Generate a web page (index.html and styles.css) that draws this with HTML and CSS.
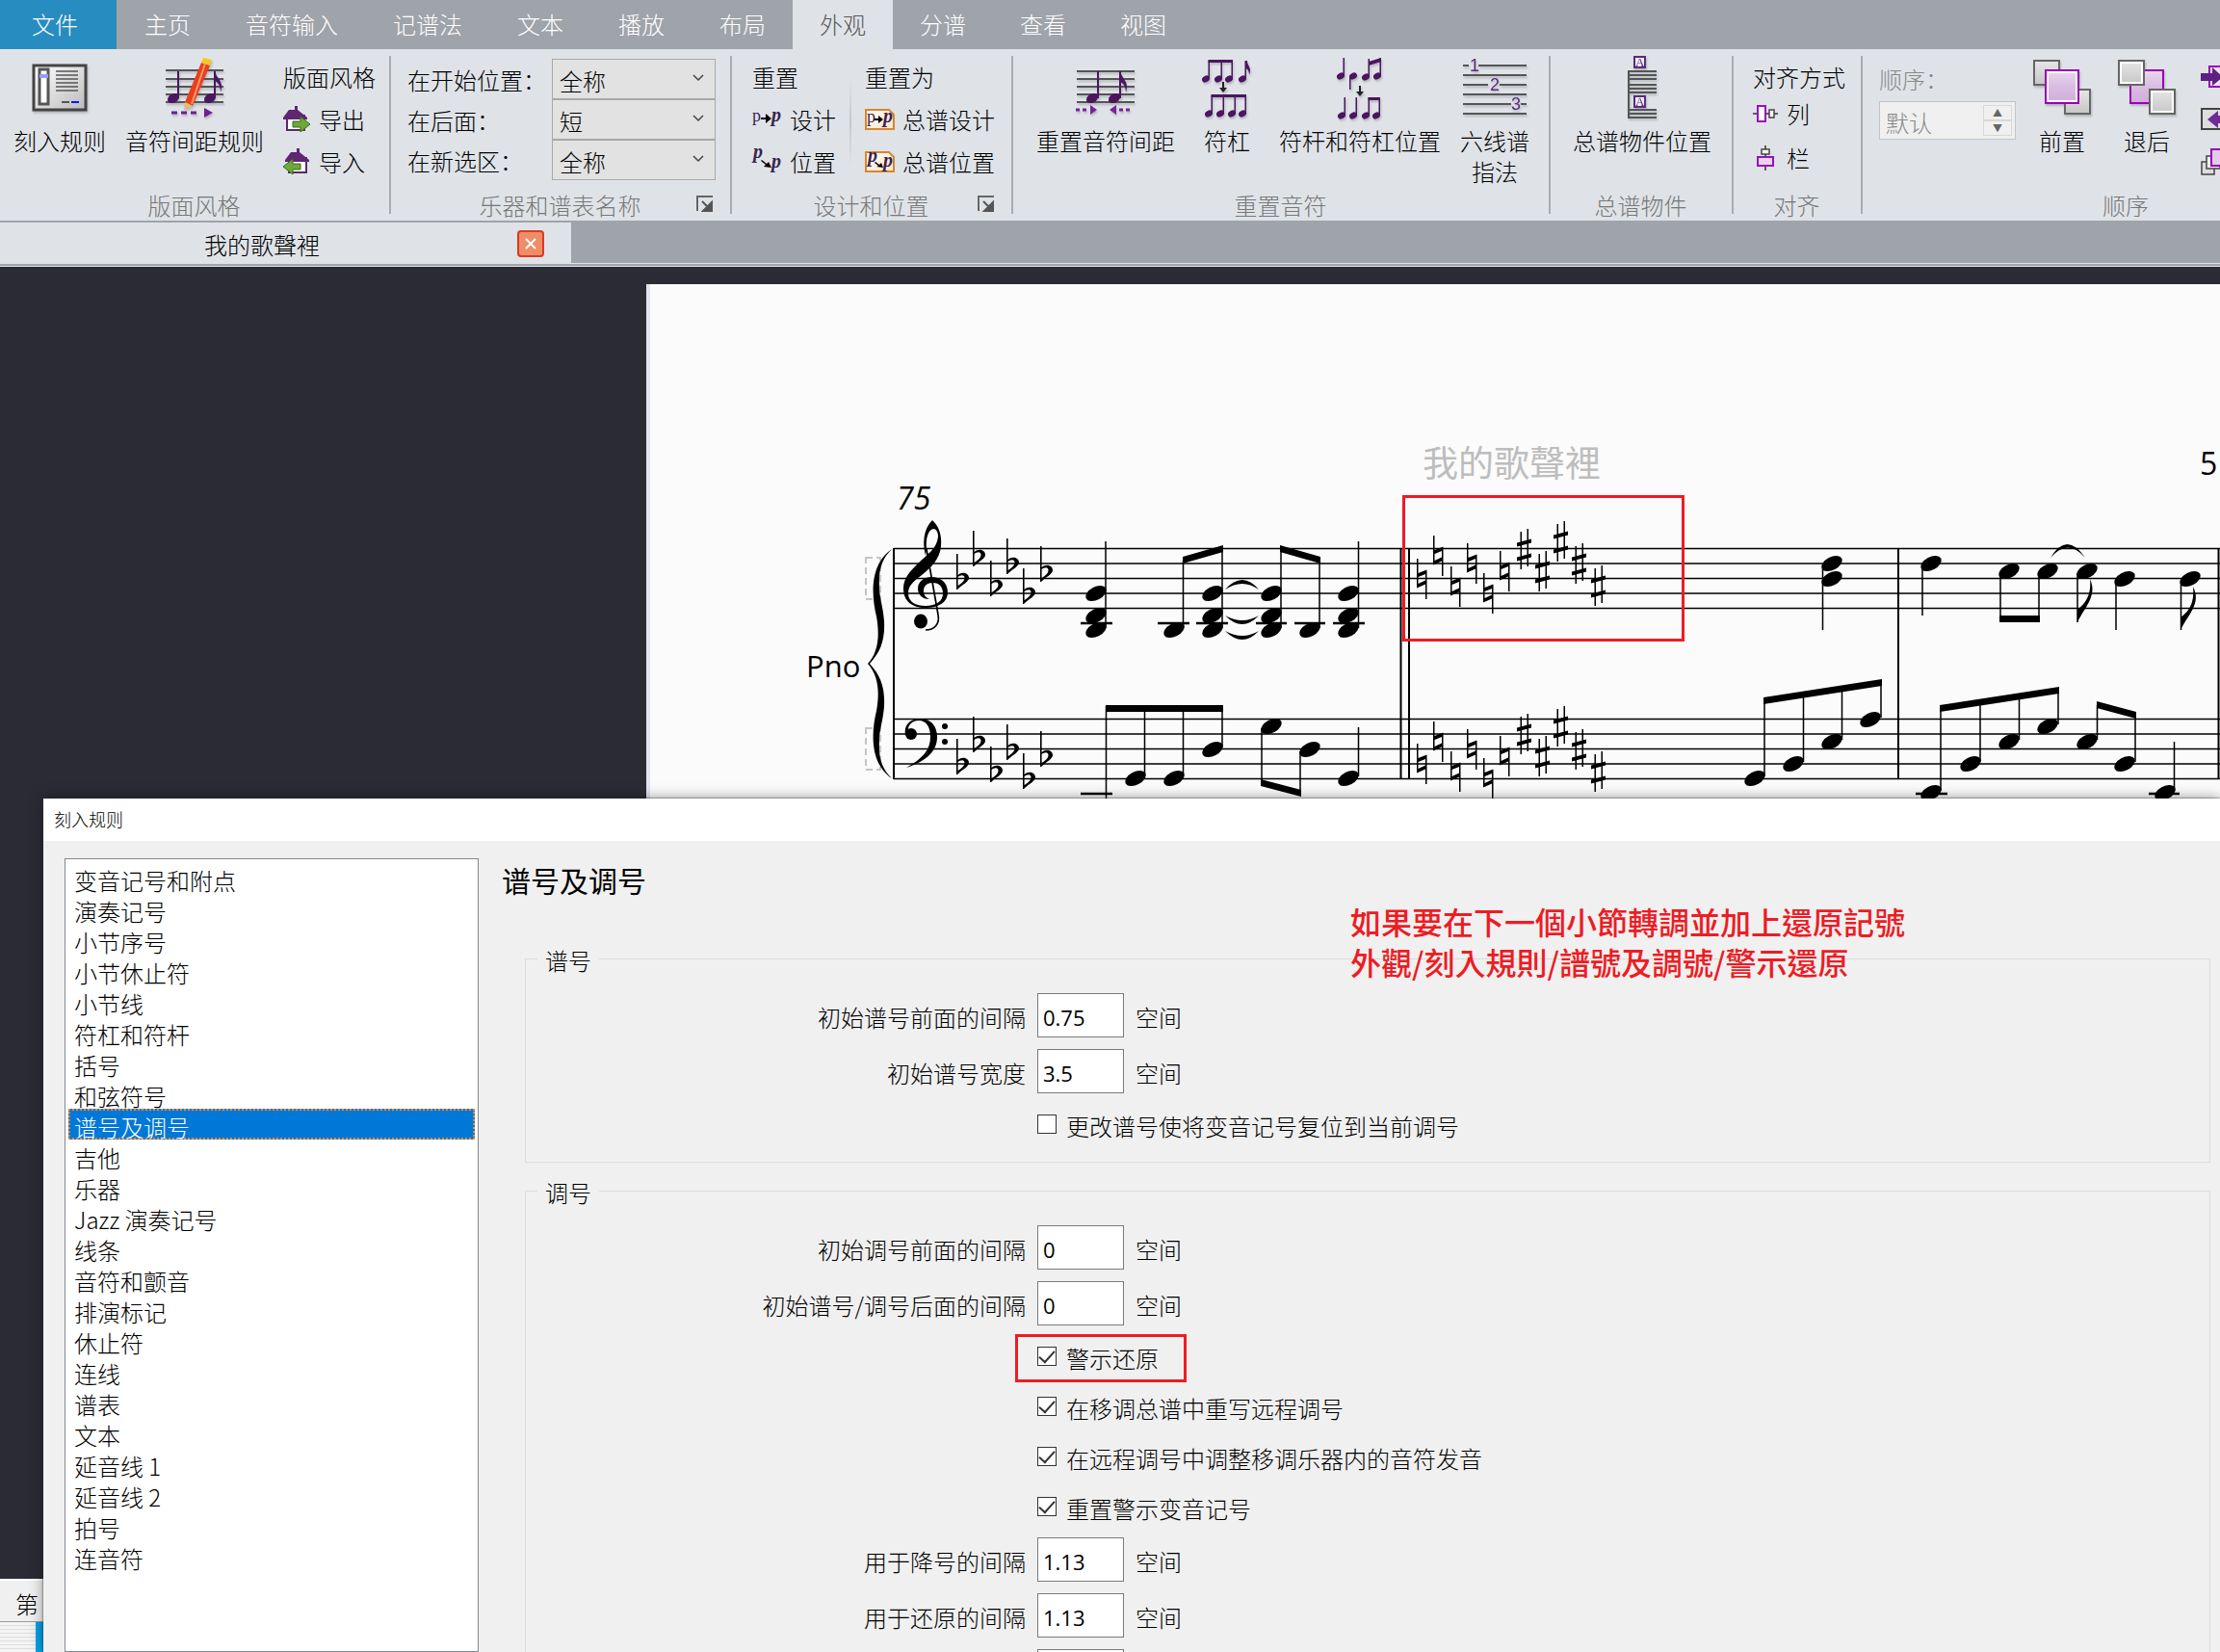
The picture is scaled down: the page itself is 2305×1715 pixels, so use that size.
FILE: index.html
```html
<!DOCTYPE html>
<html lang="zh-CN">
<head>
<meta charset="utf-8">
<title>我的歌聲裡</title>
<link rel="stylesheet" href="styles.css">
</head>
<body>
<svg class="defs" aria-hidden="true">
  <defs>
    <linearGradient id="sheet" x1="0" y1="0" x2="1" y2="1"><stop offset="0" stop-color="#fff"/><stop offset="1" stop-color="#bbb"/></linearGradient>
    <linearGradient id="lilac" x1="0" y1="0" x2="0" y2="1"><stop offset="0" stop-color="#ead9ee"/><stop offset=".5" stop-color="#d9bce2"/><stop offset="1" stop-color="#cfaedb"/></linearGradient>
    <linearGradient id="silver" x1="0" y1="0" x2="0" y2="1"><stop offset="0" stop-color="#e6e6e6"/><stop offset="1" stop-color="#c6c6c6"/></linearGradient>
    <linearGradient id="paper" x1="0" y1="0" x2="1" y2="1"><stop offset="0" stop-color="#fff"/><stop offset="1" stop-color="#fde3c4"/></linearGradient>
    <g id="head"><ellipse rx="11.5" ry="6.8" transform="rotate(-28)"/></g>
    <g id="flat"><path d="M0 0H1.6V22C6 18 13 20 13 25C13 29 6 32 1 37H0ZM1.6 24V33C6 30 8.500 28 8.500 25C8.500 21 4 22 1.600 24Z"/></g>
    <g id="natural"><path d="M0 0H1.500V15L10.500 11.500V42H9V26.500L0 30.500ZM1.500 19V26L9 22.500V16Z" fill-rule="evenodd"/></g>
    <g id="sharp"><path d="M3.500 3H5V42H3.500ZM10.500 0H12V39H10.500ZM0 14.500L15 10.500V14.500L0 18.500ZM0 29.500L15 25.500V29.500L0 33.500Z"/></g>
    <g id="small-note"><ellipse cx="4" cy="19" rx="4.200" ry="3.200" transform="rotate(-28 4 19)"/><path d="M6.500 0H8V19H6.500Z"/></g>
    <g id="house"><path d="M4 10H22V25H4Z" fill="#fff" stroke="#5b2a66" stroke-width="2"/><path d="M12 0H15V4L25 12V14H0V12L6 4H12Z" fill="#5f2672"/></g>
    <g id="launch"><path d="M1 16V1H17" fill="none" stroke="#666" stroke-width="2"/><path d="M6 6L14 14M16 7V16H7Z" fill="#555" stroke="#555" stroke-width="2"/></g>
  </defs>
</svg>

<div class="app">
  <nav class="tabs">
    <button class="tab tab-file">文件</button>
    <button class="tab">主页</button>
    <button class="tab">音符输入</button>
    <button class="tab">记谱法</button>
    <button class="tab">文本</button>
    <button class="tab">播放</button>
    <button class="tab">布局</button>
    <button class="tab tab-active">外观</button>
    <button class="tab">分谱</button>
    <button class="tab">查看</button>
    <button class="tab">视图</button>
  </nav>

  <div class="ribbon">
    <section class="group group-style">
      <div class="group-body">
        <button class="big">
          <span class="big-icon"><svg width="58" height="54" viewBox="0 0 58 54"><rect x="2" y="4" width="54" height="46" fill="url(#sheet)" stroke="#444" stroke-width="3"/><rect x="8" y="8" width="9" height="36" fill="#fff" stroke="#555" stroke-width="3"/><path d="M8 15H17" stroke="#99f" stroke-width="4"/><path d="M25 10H48M25 14H48M25 18H48M25 22H48M25 26H48M25 30H48" stroke="#555" stroke-width="1.500"/><path d="M31 42H39" stroke="#555" stroke-width="2"/><path d="M41 42H49" stroke="#11f" stroke-width="2"/></svg></span>
          <span>刻入规则</span>
        </button>
        <button class="big">
          <span class="big-icon"><svg width="62" height="62" viewBox="0 0 62 62"><path d="M1 13H61M1 22H61M1 30H61M1 38H61M1 46H61" stroke="#555" stroke-width="2"/><path d="M14 14V42M52 14V42" stroke="#4b1560" stroke-width="2"/><path d="M52 14C54 22 62 24 58 36C58 27 54 25 52 24Z" fill="#4b1560"/><ellipse cx="9" cy="42" rx="6.500" ry="4.500" transform="rotate(-30 9 42)" fill="#4b1560"/><ellipse cx="47" cy="42" rx="6.500" ry="4.500" transform="rotate(-30 47 42)" fill="#4b1560"/><path d="M7 57H36" stroke="#6f1f91" stroke-width="3" stroke-dasharray="6 4"/><path d="M41 52V62L50 57Z" fill="#6f1f91"/><path d="M38 5L47 8L29 50L21 46Z" fill="#e8401c"/><path d="M42 6L28 48" stroke="#ff9468" stroke-width="2"/><path d="M21 46L29 50L20 54Z" fill="#e6b978"/><path d="M38 5L40 0L49 2L47 8Z" fill="#f6c921"/></svg></span>
          <span>音符间距规则</span>
        </button>
        <div class="stack">
          <span class="stack-title">版面风格</span>
          <button class="small"><svg width="28" height="28" viewBox="0 0 28 28"><use href="#house"/><path d="M10 16H18V11L28 19L18 27V22H10Z" fill="#6ea83a" stroke="#3b6b1c"/></svg>导出</button>
          <button class="small"><svg width="28" height="28" viewBox="0 0 28 28"><use href="#house" x="2"/><path d="M18 16H10V11L0 19L10 27V22H18Z" fill="#6ea83a" stroke="#3b6b1c"/></svg>导入</button>
        </div>
      </div>
      <div class="caption">版面风格</div>
    </section>

    <section class="group group-names">
      <div class="fields">
        <label for="at-start">在开始位置：</label>
        <div class="drop"><select id="at-start"><option>全称</option></select><svg width="12" height="8" viewBox="0 0 12 8"><path d="M1 1L6 6L11 1" fill="none" stroke="#444" stroke-width="1.500"/></svg></div>
        <label for="after">在后面：</label>
        <div class="drop"><select id="after"><option>短</option></select><svg width="12" height="8" viewBox="0 0 12 8"><path d="M1 1L6 6L11 1" fill="none" stroke="#444" stroke-width="1.500"/></svg></div>
        <label for="at-section">在新选区：</label>
        <div class="drop"><select id="at-section"><option>全称</option></select><svg width="12" height="8" viewBox="0 0 12 8"><path d="M1 1L6 6L11 1" fill="none" stroke="#444" stroke-width="1.500"/></svg></div>
      </div>
      <div class="caption">乐器和谱表名称</div>
      <button class="launcher" aria-label="乐器和谱表名称"><svg width="17" height="17"><use href="#launch"/></svg></button>
    </section>

    <section class="group group-design">
      <div class="group-body">
        <div class="stack">
          <span class="stack-title">重置</span>
          <button class="small"><svg class="pp" width="32" height="32" viewBox="0 0 32 32"><text x="0" y="18">p</text><path d="M9 14H14V10L20 15L14 20V16H9Z"/><text class="pi" x="20" y="18">p</text></svg>设计</button>
          <button class="small"><svg class="pp" width="32" height="32" viewBox="0 0 32 32"><text class="pi" x="1" y="12">p</text><path d="M10 14L15 18L17 16L20 22L12 21L14 19L9 15Z"/><text class="pi" x="20" y="22">p</text></svg>位置</button>
        </div>
        <div class="rule"></div>
        <div class="stack">
          <span class="stack-title">重置为</span>
          <button class="small"><svg class="pp" width="32" height="32" viewBox="0 0 32 32"><path class="card" d="M1 6H25L30 11V26H1Z"/><text x="2" y="19">p</text><path d="M10 15H14V12L19 16L14 20V17H10Z"/><text class="pi" x="19" y="19">p</text></svg>总谱设计</button>
          <button class="small"><svg class="pp" width="32" height="32" viewBox="0 0 32 32"><path class="card" d="M1 6H25L30 11V26H1Z"/><text class="pi" x="3" y="16">p</text><path d="M11 16L15 19L17 17L19 22L12 21L14 20L10 17Z"/><text class="pi" x="19" y="21">p</text></svg>总谱位置</button>
        </div>
      </div>
      <div class="caption">设计和位置</div>
      <button class="launcher" aria-label="设计和位置"><svg width="17" height="17"><use href="#launch"/></svg></button>
    </section>

    <section class="group group-notes">
      <div class="group-body">
        <button class="big">
          <span class="big-icon"><svg width="62" height="62" viewBox="0 0 62 62"><path d="M1 14H61M1 22H61M1 30H61M1 38H61M1 46H61" stroke="#555" stroke-width="2"/><path d="M23 14V42M46 14V42" stroke="#4b1560" stroke-width="2"/><path d="M46 14C48 22 56 25 52 36C52 28 48 26 46 25Z" fill="#4b1560"/><ellipse cx="17" cy="42" rx="6.500" ry="4.500" transform="rotate(-30 17 42)" fill="#4b1560"/><ellipse cx="40" cy="42" rx="6.500" ry="4.500" transform="rotate(-30 40 42)" fill="#4b1560"/><path d="M0 54H13M45 54H58" stroke="#7a2299" stroke-width="3" stroke-dasharray="4 3"/><path d="M15 49V59L22 54ZM42 49V59L35 54Z" fill="#7a2299"/></svg></span>
          <span>重置音符间距</span>
        </button>
        <button class="big">
          <span class="big-icon"><svg width="52" height="60" viewBox="0 0 52 60" fill="#4b1560"><use href="#small-note" y="2"/><use href="#small-note" x="13" y="2"/><use href="#small-note" x="24" y="2"/><path d="M6.500 1H32V4H6.500ZM47 2C47 8 52 8 49 17C49 12 47 11 46 10V2Z"/><use href="#small-note" x="38" y="2"/><use href="#small-note" x="3" y="38"/><use href="#small-note" x="15" y="38"/><use href="#small-note" x="27" y="38"/><use href="#small-note" x="38" y="38"/><path d="M9.500 37H46V40H9.500Z"/><path d="M21 24H23V30H26L22 35L18 30H21Z" fill="#222"/></svg></span>
          <span>符杠</span>
        </button>
        <button class="big">
          <span class="big-icon"><svg width="48" height="62" viewBox="0 0 48 62" fill="#4b1560"><use href="#small-note" y="0"/><ellipse cx="17" cy="19" rx="4.200" ry="3.200" transform="rotate(-28 17 19)"/><path d="M13 19H14.500V33H13ZM33 4L46 0V4L33 8Z"/><use href="#small-note" x="26" y="1"/><use href="#small-note" x="38" y="0"/><use href="#small-note" x="1" y="41"/><use href="#small-note" x="13" y="41"/><use href="#small-note" x="26" y="41"/><use href="#small-note" x="37" y="41"/><path d="M32.500 44V41H45V44Z"/><path d="M23 29H25V35H28L24 40L20 35H23Z" fill="#222"/></svg></span>
          <span>符杆和符杠位置</span>
        </button>
        <button class="big">
          <span class="big-icon"><svg width="66" height="62" viewBox="0 0 66 62" class="fingering"><path d="M0 8H6M16 8H66M0 18H66M0 28H26M38 28H66M0 38H66M0 48H50M60 48H66M0 58H66" stroke="#555" stroke-width="2"/><text x="7" y="14">1</text><text x="28" y="34">2</text><text x="50" y="54">3</text></svg></span>
          <span>六线谱<br>指法</span>
        </button>
      </div>
      <div class="caption">重置音符</div>
    </section>

    <section class="group group-objects">
      <div class="group-body">
        <button class="big">
          <span class="big-icon"><svg width="32" height="66" viewBox="0 0 32 66" class="objects"><path d="M2 15V65M1 16H31M1 20H31M1 24H31M1 30H31M1 34H31M1 38H31M1 56H31M1 60H31M1 64H31" stroke="#555" stroke-width="2"/><rect x="8" y="1" width="11" height="11"/><rect x="8" y="42" width="11" height="11"/><text x="9" y="11">A</text><text x="9" y="52">A</text></svg></span>
          <span>总谱物件位置</span>
        </button>
      </div>
      <div class="caption">总谱物件</div>
    </section>

    <section class="group group-align">
      <div class="group-body">
        <div class="stack stack-tight">
          <span class="stack-title">对齐方式</span>
          <button class="small"><svg width="26" height="26" viewBox="0 0 26 26"><path d="M0 13H26" stroke="#333" stroke-width="1.500"/><rect x="5" y="5" width="8" height="16" fill="#fff" stroke="#9a10b8" stroke-width="2"/><rect x="17" y="9" width="5" height="8" fill="#fff" stroke="#444" stroke-width="1.500"/></svg>列</button>
          <button class="small"><svg width="26" height="26" viewBox="0 0 26 26"><path d="M13 0V26" stroke="#333" stroke-width="1.500"/><rect x="5" y="12" width="16" height="9" fill="#ead4f0" stroke="#9a10b8" stroke-width="2"/><rect x="9" y="4" width="8" height="5" fill="#fff" stroke="#444" stroke-width="1.500"/></svg>栏</button>
        </div>
      </div>
      <div class="caption">对齐</div>
    </section>

    <section class="group group-order">
      <div class="group-body">
        <div class="order-field">
          <label for="order">顺序：</label>
          <div class="spin">
            <input id="order" type="text" value="默认" disabled>
            <span class="spin-buttons"><button aria-label="增加" disabled>▲</button><button aria-label="减少" disabled>▼</button></span>
          </div>
        </div>
        <button class="big">
          <span class="big-icon"><svg width="62" height="60" viewBox="0 0 62 60"><rect x="2" y="2" width="26" height="25" fill="url(#silver)" stroke="#666" stroke-width="2"/><rect x="34" y="32" width="26" height="25" fill="url(#silver)" stroke="#666" stroke-width="2"/><rect x="14" y="12" width="34" height="34" fill="url(#lilac)" stroke="#9a00b5" stroke-width="2"/><rect x="16" y="14" width="30" height="30" fill="none" stroke="#fff" stroke-width="2"/></svg></span>
          <span>前置</span>
        </button>
        <button class="big">
          <span class="big-icon"><svg width="62" height="60" viewBox="0 0 62 60"><rect x="14" y="12" width="34" height="34" fill="url(#lilac)" stroke="#9a00b5" stroke-width="2"/><rect x="2" y="2" width="26" height="25" fill="url(#silver)" stroke="#666" stroke-width="2"/><rect x="4" y="4" width="22" height="21" fill="none" stroke="#fff" stroke-width="2"/><rect x="34" y="32" width="26" height="25" fill="url(#silver)" stroke="#666" stroke-width="2"/><rect x="36" y="34" width="22" height="21" fill="none" stroke="#fff" stroke-width="2"/></svg></span>
          <span>退后</span>
        </button>
        <div class="stack">
          <button class="small" aria-label="前移"><svg width="28" height="24" viewBox="0 0 28 24"><path d="M9 1H28V22H9Z" fill="#f0e2f3" stroke="#9a00b5" stroke-width="2"/><path d="M0 8H12V2L23 12L12 21V16H0Z" fill="#5b2080"/></svg></button>
          <button class="small" aria-label="后移"><svg width="28" height="24" viewBox="0 0 28 24"><path d="M1 1H21V22H1Z" fill="#ddd" stroke="#444" stroke-width="2"/><path d="M28 8H18V3L7 12L18 21V16H28Z" fill="#6d2a99"/></svg></button>
          <button class="small" aria-label="重排"><svg width="28" height="28" viewBox="0 0 28 28"><path d="M1 14H14V27H1Z" fill="#ddd" stroke="#444" stroke-width="1.500"/><path d="M6 8H20V21H6Z" fill="#eee" stroke="#444" stroke-width="1.500"/><path d="M11 1H28V18H11Z" fill="#e3cbea" stroke="#9a00b5" stroke-width="2"/></svg></button>
        </div>
      </div>
      <div class="caption">顺序</div>
    </section>
  </div>

  <div class="documents">
    <div class="document">
      <span class="document-name">我的歌聲裡</span>
      <button class="close" aria-label="关闭"><svg width="14" height="14" viewBox="0 0 14 14"><path d="M2 2L12 12M12 2L2 12" stroke="#fff" stroke-width="2"/></svg></button>
    </div>
  </div>

  <main class="workspace">
    <div class="page">
      <svg class="score" width="1634" height="540" viewBox="671 295 1634 540">
        <text class="song" x="1477" y="495">我的歌聲裡</text>
        <text class="page-number" x="2284" y="493">5</text>
        <text class="bar-number" x="931" y="529">75</text>
        <text class="part" x="837" y="703">Pno</text>
        <g class="brackets"><rect x="899" y="579" width="15" height="43"/><rect x="899" y="756" width="15" height="43"/></g>
        <path id="brace" d="M926 570C904 585 904 615 910 640C914 662 911 678 901 689C911 700 914 716 910 738C904 763 904 793 926 808C916 798 912 788 913 768C913 758 917 748 918 733C919 713 914 701 903 689C914 677 919 665 918 645C917 630 913 620 913 610C912 590 916 580 926 570Z"/>
        <path class="staff" d="M928 569.500H2305M928 585H2305M928 600.500H2305M928 616H2305M928 631.500H2305M928 746.500H2305M928 762H2305M928 777.500H2305M928 793H2305M928 808.500H2305"/>
        <path class="bars" d="M928 569V809M1454.500 569V809M1463 569V809M1971 569V809M2303.500 569V809"/>
        <path d="M961 577C958 565 958 550 968 540C975 546 978 556 977 567C976 580 967 589 957 597C948 604 943 608 943 616C943 625 951 629 961 629C972 629 979 624 979 616C979 608 974 605 968 605C962 605 959 609 959 613C959 618 961 620 965 622C957 622 953 617 953 611C953 604 959 599 967 599C977 599 984 605 984 615C984 625 975 631 961 631C947 631 938 624 938 611C938 600 945 593 953 585C962 576 973 570 974 557C974 552 972 549 969 549C964 550 961 558 962 570Z"/>
        <path d="M962 570L974 638C976 648 970 654 961 654" fill="none" stroke="#000" stroke-width="1.700"/><ellipse cx="956" cy="645" rx="7" ry="7.500"/>
        <path d="M940 763C938 752 946 746 955 746C967 746 973 754 973 765C973 780 962 790 941 797C957 788 966 779 966 765C966 755 962 748 954 748C947 748 943 753 943 757Z"/><circle cx="946" cy="762" r="6"/><circle cx="981" cy="754" r="3"/><circle cx="981" cy="770" r="3"/>
        <use href="#flat" x="993" y="575"/><use href="#flat" x="1010" y="551"/><use href="#flat" x="1028" y="582"/><use href="#flat" x="1045" y="559"/><use href="#flat" x="1062" y="590"/><use href="#flat" x="1080" y="567"/>
        <use href="#flat" x="993" y="767"/><use href="#flat" x="1010" y="744"/><use href="#flat" x="1028" y="775"/><use href="#flat" x="1045" y="752"/><use href="#flat" x="1062" y="782"/><use href="#flat" x="1080" y="759"/>
        <use href="#natural" x="1471" y="580"/><use href="#natural" x="1488" y="556"/><use href="#natural" x="1506" y="588"/><use href="#natural" x="1523" y="564"/><use href="#natural" x="1540" y="595"/><use href="#natural" x="1557" y="572"/>
        <use href="#sharp" x="1575" y="549"/><use href="#sharp" x="1594" y="572"/><use href="#sharp" x="1613" y="541"/><use href="#sharp" x="1632" y="564"/><use href="#sharp" x="1652" y="587"/>
        <use href="#natural" x="1471" y="772"/><use href="#natural" x="1488" y="749"/><use href="#natural" x="1506" y="780"/><use href="#natural" x="1523" y="757"/><use href="#natural" x="1540" y="787"/><use href="#natural" x="1557" y="764"/>
        <use href="#sharp" x="1575" y="741"/><use href="#sharp" x="1594" y="764"/><use href="#sharp" x="1613" y="733"/><use href="#sharp" x="1632" y="757"/><use href="#sharp" x="1652" y="780"/>
        <use href="#head" x="1138" y="616"/><use href="#head" x="1138" y="639"/><use href="#head" x="1138" y="654"/>
        <use href="#head" x="1219" y="654"/>
        <use href="#head" x="1259" y="616"/><use href="#head" x="1259" y="639"/><use href="#head" x="1259" y="654"/>
        <use href="#head" x="1320" y="616"/><use href="#head" x="1320" y="639"/><use href="#head" x="1320" y="654"/>
        <use href="#head" x="1360" y="654"/>
        <use href="#head" x="1400" y="616"/><use href="#head" x="1400" y="639"/><use href="#head" x="1400" y="654"/>
        <use href="#head" x="1902" y="585"/><use href="#head" x="1902" y="601"/>
        <use href="#head" x="2005" y="585"/><use href="#head" x="2086" y="593"/><use href="#head" x="2126" y="593"/><use href="#head" x="2167" y="593"/><use href="#head" x="2206" y="601"/><use href="#head" x="2274" y="601"/>
        <use href="#head" x="1179" y="808"/><use href="#head" x="1219" y="808"/><use href="#head" x="1259" y="778"/><use href="#head" x="1320" y="754"/><use href="#head" x="1360" y="778"/><use href="#head" x="1400" y="808"/>
        <use href="#head" x="1822" y="808"/><use href="#head" x="1862" y="793"/><use href="#head" x="1902" y="770"/><use href="#head" x="1942" y="747"/>
        <use href="#head" x="2005" y="823"/><use href="#head" x="2046" y="793"/><use href="#head" x="2086" y="770"/><use href="#head" x="2126" y="754"/><use href="#head" x="2167" y="770"/><use href="#head" x="2206" y="793"/><use href="#head" x="2248" y="823"/>
        <path class="ledgers" d="M1122 647H1155M1202 647H1235M1242 647H1275M1304 647H1336M1344 647H1376M1384 647H1417M1122 824H1155M1989 824H2022M2231 824H2263"/>
        <path class="stems" d="M1148 562V652M1228.500 582V652M1269 570V652M1330 570V652M1370 582V652M1410.500 562V652M1892.500 587V654M1996 587V639M2077 595V645M2117 595V645M2157 595V646M2197 603V654M2264.500 603V654M1148.500 733V835M1188.500 735V806M1228.500 735V806M1269 735V776M1310 756V815M1350 780V826M1410.500 755V806M1832 728V806M1872.500 722V791M1912.500 716V768M1953 708V745M2015 736V821M2056 730V791M2096.500 724V768M2137 716V752M2177.500 732V768M2217 743V791M2257.500 770V821"/>
        <path d="M1228 578L1270 566V573L1228 585ZM1329 566L1371 578V585L1329 573ZM2076 639H2118V646H2076ZM1148 732H1270V739H1148ZM1309 809L1351 820V827L1309 816ZM1831 724L1954 705V712L1831 731ZM2014 732L2138 713V720L2014 739ZM2177 728L2218 739V746L2177 735Z"/>
        <path d="M1272 612Q1290 592 1307 612Q1290 600 1272 612ZM1272 639Q1290 657 1307 639Q1290 649 1272 639ZM1272 655Q1290 673 1307 655Q1290 665 1272 655ZM2129 579Q2146 551 2165 579Q2147 558 2129 579Z"/>
        <path d="M2157 646V633C2163 628 2172 620 2170 601C2178 618 2165 630 2157 646ZM2264 654V641C2271 636 2279 628 2277 609C2286 626 2272 638 2264 654Z"/>
        <rect class="mark" x="1457.500" y="515.500" width="290" height="149"/>
      </svg>
    </div>
  </main>
  <footer class="status">第</footer>
  <div class="below"><div class="below-edge"></div></div>

  <section class="dialog">
    <header class="dialog-title">刻入规则</header>
    <div class="dialog-body">
      <div class="list">
        <button>变音记号和附点</button>
        <button>演奏记号</button>
        <button>小节序号</button>
        <button>小节休止符</button>
        <button>小节线</button>
        <button>符杠和符杆</button>
        <button>括号</button>
        <button>和弦符号</button>
        <button class="selected">谱号及调号</button>
        <button>吉他</button>
        <button>乐器</button>
        <button>Jazz 演奏记号</button>
        <button>线条</button>
        <button>音符和颤音</button>
        <button>排演标记</button>
        <button>休止符</button>
        <button>连线</button>
        <button>谱表</button>
        <button>文本</button>
        <button>延音线 1</button>
        <button>延音线 2</button>
        <button>拍号</button>
        <button>连音符</button>
      </div>
      <form class="panel">
        <h1>谱号及调号</h1>
        <p class="note" lang="zh-TW">如果要在下一個小節轉調並加上還原記號<br>外觀/刻入規則/譜號及調號/警示還原</p>
        <fieldset>
          <legend>谱号</legend>
          <div class="row"><label for="clef-gap">初始谱号前面的间隔</label><input id="clef-gap" type="text" value="0.75"><span>空间</span></div>
          <div class="row"><label for="clef-width">初始谱号宽度</label><input id="clef-width" type="text" value="3.5"><span>空间</span></div>
          <div class="check"><label><input type="checkbox"><span>更改谱号使将变音记号复位到当前调号</span></label></div>
        </fieldset>
        <fieldset>
          <legend>调号</legend>
          <div class="row"><label for="key-gap">初始调号前面的间隔</label><input id="key-gap" type="text" value="0"><span>空间</span></div>
          <div class="row"><label for="after-gap">初始谱号/调号后面的间隔</label><input id="after-gap" type="text" value="0"><span>空间</span></div>
          <div class="check"><label class="marked"><input type="checkbox" checked><span>警示还原</span></label></div>
          <div class="check"><label><input type="checkbox" checked><span>在移调总谱中重写远程调号</span></label></div>
          <div class="check"><label><input type="checkbox" checked><span>在远程调号中调整移调乐器内的音符发音</span></label></div>
          <div class="check"><label><input type="checkbox" checked><span>重置警示变音记号</span></label></div>
          <div class="row"><label for="flat-gap">用于降号的间隔</label><input id="flat-gap" type="text" value="1.13"><span>空间</span></div>
          <div class="row"><label for="natural-gap">用于还原的间隔</label><input id="natural-gap" type="text" value="1.13"><span>空间</span></div>
          <div class="row"><input class="unlabelled" aria-label="间隔" type="text"></div>
        </fieldset>
      </form>
    </div>
  </section>
</div>
</body>
</html>
```
FILE: styles.css
```css
* { box-sizing: border-box; }

body {
  margin: 0;
  height: 100vh;
  overflow: hidden;
  font: 300 24px/32px "Noto Sans CJK SC", sans-serif;
  color: #000;
}

button, input, select { font: inherit; color: inherit; margin: 0; padding: 0; border: 0; background: none; border-radius: 0; }
.defs { position: absolute; width: 0; height: 0; }

.app { position: relative; height: 100%; display: flex; flex-direction: column; background: #2b2b35; }

/* tabs */
.tabs { flex: none; display: flex; height: 51px; background: #9fa3aa; color: #fff; }
.tab { padding: 0 28px 2px; white-space: nowrap; }
.tab-file { background: #278cbf; padding: 0 40px 2px 33px; }
.tab-file ~ .tab { margin-left: 1px; }
.tabs .tab-active, .tab-active ~ .tab.tab { margin-left: 0; }
.tab-active { background: #dfe3e8; color: #555; }

/* ribbon */
.ribbon { flex: none; display: flex; height: 180px; padding-top: 7px; overflow: hidden; background: #dfe3e8; border-bottom: 2px solid #9fa3aa; }
.group {
  position: relative;
  flex: none;
  display: flex;
  flex-direction: column;
  background: linear-gradient(#a9adb2, #a9adb2) right top / 2px 164px no-repeat;
}
.group-style { width: 406px; padding-left: 14px; }
.group-names { width: 354px; padding: 3px 17px 0 17px; }
.group-design { width: 292px; padding-left: 21px; }
.group-notes { width: 558px; padding-left: 24px; }
.group-objects { width: 190px; padding-left: 23px; }
.group-align { width: 134px; padding-left: 20px; }
.group-order { width: 549px; padding-left: 17px; }
.group-body { display: flex; gap: 20px; height: 142px; }
.group-notes .group-body { gap: 28px; }
.group-notes .group-body .big:last-child { margin-left: -8px; }
.group-design .group-body { gap: 14px; }
.group-order .group-body { gap: 24px; }
.group-order .big { width: 64px; }
.group-order .order-field + .big { margin-left: -8px; }
.caption { position: absolute; left: 0; right: 3px; bottom: 1px; text-align: center; line-height: 30px; color: #777; }
.launcher { position: absolute; right: 20px; top: 145px; width: 17px; height: 17px; line-height: 0; }

.big { flex: none; display: flex; flex-direction: column; align-items: center; white-space: nowrap; }
.big-icon { height: 72px; display: flex; align-items: center; }
.big-icon svg { margin-bottom: 6px; filter: drop-shadow(1px 2px 1px #0003); overflow: visible; }

.stack { flex: none; display: grid; grid-template-rows: 44px 44px 44px; align-items: center; justify-items: start; align-content: start; white-space: nowrap; }
.stack-tight { grid-template-rows: 44px 32px 60px; }
.small { display: flex; align-items: center; gap: 9px; }
.group-design .small { gap: 7px; }
.rule { width: 2px; height: 90px; margin-top: 24px; background: linear-gradient(#dfe3e8, #c4c8cd, #dfe3e8); }

.pp { overflow: visible; }
.pp text { font: 18px "Liberation Serif", serif; fill: #3a2350; }
.pp .pi { font-style: italic; font-weight: 700; font-size: 20px; }
.pp .card { fill: url(#paper); stroke: #d9862b; stroke-width: 2; }
.fingering text { font: 18px "Liberation Sans", sans-serif; fill: #5b2a80; }
.objects rect { fill: #eee; stroke: #5b2a80; stroke-width: 2; }
.objects text { font: 13px "Liberation Serif", serif; fill: #5b2a80; }

.fields { display: grid; grid-template-columns: 1fr 170px; grid-auto-rows: 42px; }
.fields label, .order-field label { font-family: "Noto Sans CJK TC", sans-serif; white-space: nowrap; }
.fields label { padding-top: 6px; }
.drop { position: relative; }
.drop select { width: 100%; height: 42px; padding: 4px 0 0 7px; appearance: none; background: #e2e2e2; border: 1px solid #a8a8a8; }
.drop svg { position: absolute; right: 12px; top: 16px; }

.order-field { width: 142px; padding-top: 8px; color: #888; }
.order-field label { display: block; }
.spin { display: flex; height: 40px; margin-top: 7px; padding: 3px; background: #f0f0f0; border: 1px solid #c4c4c4; }
.spin input { flex: 1; min-width: 0; padding: 4px 0 0 3px; }
.spin-buttons { display: grid; width: 30px; grid-template-rows: 1fr 1fr; }
.spin-buttons button { border: 1px solid #d8d8d8; font-size: 10px; line-height: 12px; color: #666; }

/* open documents */
.documents { flex: none; display: flex; height: 46px; background: #9fa3aa; border-bottom: 4px double #dfe3e8; }
.document { display: flex; align-items: center; width: 593px; padding: 3px 28px 0 212px; justify-content: space-between; background: #dfe3e8; }
.close { display: grid; place-items: center; width: 28px; height: 28px; margin-bottom: 2px; background: #ee8d66; border: 2px solid #d83a26; border-radius: 4px; }

/* score */
.workspace { flex: 1; min-height: 0; padding: 18px 0 0 671px; overflow: hidden; }
.page { background: #fbfbfb; border-left: 4px solid #e4e4f0; height: 100%; overflow: hidden; }
.score { display: block; margin-left: -4px; }
.song { font: 37px "Noto Sans CJK TC", sans-serif; fill: #bdbdbd; }
.page-number, .bar-number, .part { font: 32px "Open Sans", sans-serif; }
.bar-number { font-style: italic; }
.part { font-size: 31px; }
.brackets rect { fill: none; stroke: #c4c4c4; stroke-width: 2; stroke-dasharray: 7 4; }
.staff { fill: none; stroke: #000; stroke-width: 1.4; }
.bars { fill: none; stroke: #000; stroke-width: 2; }
.ledgers { fill: none; stroke: #000; stroke-width: 2.4; }
.stems { fill: none; stroke: #000; stroke-width: 1.5; }
.mark { fill: none; stroke: #ed1c24; stroke-width: 3; }

.status { flex: none; height: 45px; padding: 8px 0 0 16px; background: #f0f0f0; border-top: 2px solid #fff; border-bottom: 1px solid #999; }
.below { flex: none; height: 31px; background: repeating-linear-gradient(#f4f4f4 0 3px, #dedede 3px 4px); }
.below-edge { width: 45px; height: 100%; border-right: 8px solid #00a2e8; }

/* dialog */
.dialog {
  position: absolute;
  left: 45px;
  top: 829px;
  right: 0;
  bottom: 0;
  display: flex;
  flex-direction: column;
  overflow: hidden;
  background: #f0f0f0;
  box-shadow: 0 0 2px #333, 0 0 14px #0006;
}
.dialog-title { flex: none; height: 44px; padding-left: 11px; font-size: 18px; line-height: 42px; background: #fff; }
.dialog-body { flex: 1; min-height: 0; display: flex; gap: 24px; padding: 18px 10px 0 22px; }
.list { flex: none; width: 430px; padding: 3px; background: #fff; border: 1px solid #82878f; }
.list button { display: block; width: 100%; height: 32px; padding: 3px 5px 0; line-height: 29px; text-align: left; border: 1px solid transparent; }
.list .selected { background: #0078d7; color: #fff; border: 2px dotted #ff8728; padding: 2px 4px 0; }
.panel { position: relative; flex: 1; min-width: 0; }
.panel h1 { margin: 0 0 48px; font-size: 30px; line-height: 44px; font-weight: 400; }
.note { position: absolute; left: 881px; top: 44px; margin: 0; font: 500 32px/42px "Noto Sans CJK TC", sans-serif; color: #ed1c24; white-space: nowrap; }

fieldset { min-width: 0; margin: 0 0 17px 24px; padding: 18px 0 13px; border: 1px solid #dcdcdc; }
legend { margin-left: 12px; padding: 4px 8px 0; line-height: 20px; }
.row { display: flex; align-items: center; gap: 12px; height: 58px; }
.row label { width: 519px; padding-top: 3px; text-align: right; }
.row span { padding-top: 3px; }
.row input { width: 90px; height: 46px; padding: 4px 0 0 5px; background: #fff; border: 1px solid #7a7a7a; font: 22px "Open Sans", sans-serif; }
.row .unlabelled { margin-left: 531px; }
.check { display: flex; align-items: center; height: 52px; padding-left: 531px; }
.check label { position: relative; display: flex; align-items: center; gap: 10px; }
.check span { padding-top: 4px; }
.check input { appearance: none; display: grid; place-items: center; width: 20px; height: 20px; background: #fff; border: 1px solid #333; }
.check input:checked::before { content: ""; width: 14px; height: 7px; border: solid #333; border-width: 0 0 2px 2px; rotate: -48deg; translate: 0 -2px; }
.marked::after { content: ""; position: absolute; inset: -5px -29px -9px -23px; border: 3px solid #ed1c24; }
```
